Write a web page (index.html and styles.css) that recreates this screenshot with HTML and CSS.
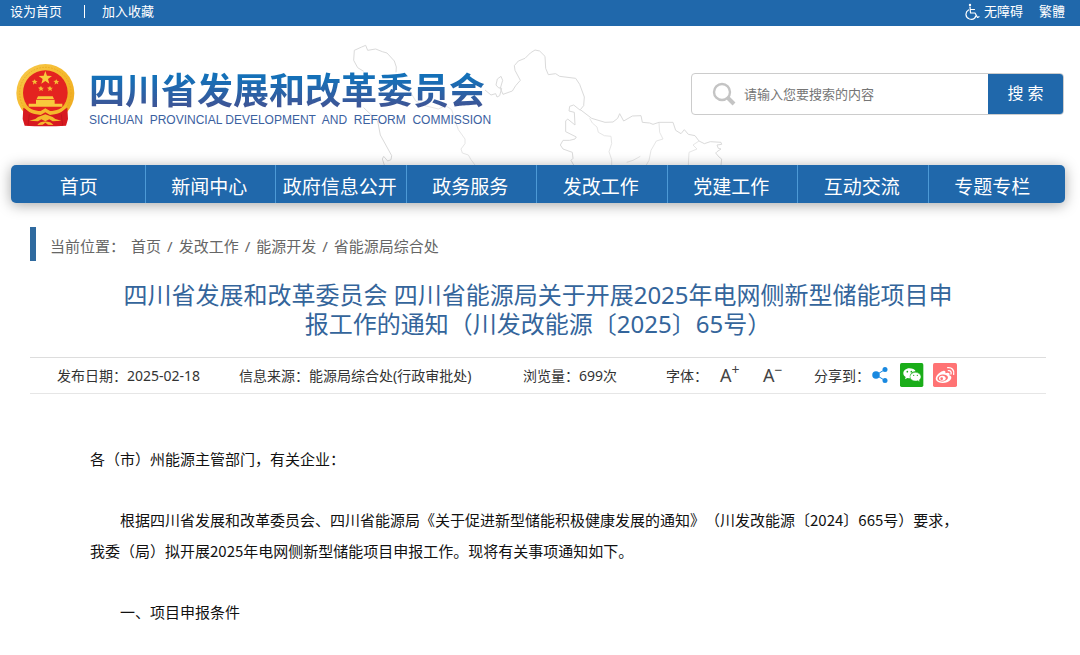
FILE: index.html
```html
<!DOCTYPE html>
<html lang="zh-CN">
<head>
<meta charset="utf-8">
<meta name="viewport" content="width=device-width, initial-scale=1">
<title>四川省发展和改革委员会</title>
<link rel="stylesheet" href="styles.css">
</head>
<body>
<div class="topbar">
  <div class="topbar-links"><a href="#">设为首页</a><span class="topbar-sep"></span><a href="#">加入收藏</a></div>
  <div class="topbar-tools">
    <a class="access" href="#"><svg width="15" height="17" viewBox="0 0 30 34" fill="none" stroke="currentColor" stroke-width="2.4" stroke-linecap="round" stroke-linejoin="round"><circle cx="10" cy="4" r="2.4" fill="currentColor" stroke="none"/><path d="M10 8l1 12h9l5 9 3-1.500M11 13h8M7 14c-7 4-7 15 2 18 6 1.500 11-1 12.500-6"/></svg>无障碍</a>
    <a href="#">繁體</a>
  </div>
</div>
<header class="header">
  <svg class="map" width="385" height="130" viewBox="0 0 1155 390" fill="none" stroke="#dadada" stroke-width="3" stroke-linejoin="round">
    <path d="M56 109L38 98 26 76 28 46 50 36 62 31 68 46 92 42 112 50 126 54 148 78 154 96 153 112M420 165L438 180 452 176 456 186 464 182 470 160 460 158 453 150 457 132 468 124 473 136 466 160 474 178 502 168 512 152 526 136 510 106 508 92 520 78 540 70 556 54 570 45 584 48 600 64 602 100 610 119 632 116 644 124 692 130 704 148 718 186 716 212 706 224 740 250 780 262 804 261 818 250 824 236 836 258 862 243 888 242 892 262 914 264 924 268 942 262 984 262 992 286 1008 296 1018 284 1030 298 1050 302 1062 318 1078 326 1096 320 1128 322 1130 328 1116 330 1120 340 1128 342 1116 350 1112 354 1122 366 1130 372 1128 390"/>
    <path d="M56 218L98 258 106 300 140 362 138 374 128 378 116 364 112 372 118 390"/>
    <path stroke="#e6e6e6" d="M187 155L212 198 240 212 280 222 302 212 320 224 335 270 340 284 360 312 360 326 348 342 352 354 370 360 378 374 390 390"/>
    <path d="M706 226L686 210 674 214 672 228 688 232 690 270 668 252 662 258 662 290 694 306 690 312 674 316 654 316 646 330 654 342 682 352 684 370 678 376 686 390"/>
    <path stroke="#e6e6e6" d="M734 250L742 264 756 276 760 292 778 302 798 304 800 326 792 350 800 374 800 390M942 264L944 292 954 312 934 318 918 346 912 376 904 390M845 382L864 376 886 364M1062 318L1044 330 1056 342 1032 352 1030 390"/>
  </svg>
  <a class="brand" href="#">
    <svg class="emblem" width="60" height="64" viewBox="0 0 180 192" aria-label="国徽">
      <defs><linearGradient id="gold" x1="0" y1="0" x2="1" y2="1"><stop offset="0" stop-color="#f7cb4e"/><stop offset=".5" stop-color="#f5b92c"/><stop offset="1" stop-color="#eda71d"/></linearGradient></defs>
      <circle cx="88" cy="90" r="87" fill="url(#gold)"/>
      <circle cx="88" cy="90" r="77" fill="none" stroke="#e5a11a" stroke-width="2" stroke-dasharray="5 4"/>
      <circle cx="88" cy="89" r="67" fill="#e42320"/>
      <path fill="#f8ca3c" d="M88 24l5 14 15 1-12 9 4 14-12-8-12 8 4-14-12-9 15-1z"/>
      <path fill="#f5bd36" d="M56 49l3 5 6 0-5 4 2 6-6-3-5 4 1-7-5-4 6-1zM121 49l3 5 6 0-5 4 2 6-6-3-5 4 1-7-5-4 6-1zM75 69l3 5 6 0-5 4 2 6-6-3-5 4 1-7-5-4 6-1zM102 69l3 5 6 0-5 4 2 6-6-3-5 4 1-7-5-4 6-1z"/>
      <path fill="#f8ca3c" d="M66 100h44l4 8H62zM60 110h56v12H60zM38 122h101v9H38z"/>
      <path fill="#d71920" d="M22 134c20 10 36 16 66 18 30-2 46-8 66-18l2 34-6 20-30 2H56l-30-2-6-20z"/>
      <path fill="#f5b92c" d="M22 122c16 14 34 22 52 22l14-8 14 8c18 0 36-8 52-22-4 18-18 28-38 32l-14 2-14-8-14 8-14-2c-20-4-34-14-38-32z"/>
      <path fill="#f5b92c" d="M66 162l22-8 22 8 8 6 18 5-26 2-10-6-12 6-12-6-10 6-26-2 18-5zM64 186c8-14 40-14 48 0l-16-1-8-6-8 6z"/>
      <path fill="none" stroke="#b5121b" stroke-width="2" d="M40 154l-4 34M136 154l4 34"/>
    </svg>
    <span class="brand-text"><span class="brand-cn">四川省发展和改革委员会</span><span class="brand-en">SICHUAN  PROVINCIAL DEVELOPMENT  AND  REFORM  COMMISSION</span></span>
  </a>
  <form class="search">
    <label class="search-label" for="q" aria-label="搜索"><svg width="24" height="24" viewBox="0 0 24 24" fill="none" stroke="#c4c4c4"><circle cx="10" cy="10" r="8" stroke-width="2.400"/><path d="M16 16l6 6" stroke-width="4"/></svg></label>
    <input id="q" class="search-input" type="text" placeholder="请输入您要搜索的内容">
    <button class="search-btn" type="button">搜 索</button>
  </form>
</header>
<nav class="nav">
  <a href="#">首页</a><a href="#">新闻中心</a><a href="#">政府信息公开</a><a href="#">政务服务</a><a href="#">发改工作</a><a href="#">党建工作</a><a href="#">互动交流</a><a href="#">专题专栏</a>
</nav>
<main class="main">
  <div class="crumbs"><span class="crumbs-label">当前位置：</span><a href="#">首页</a><span>/</span><a href="#">发改工作</a><span>/</span><a href="#">能源开发</a><span>/</span><a href="#">省能源局综合处</a></div>
  <h1 class="title">四川省发展和改革委员会 四川省能源局关于开展2025年电网侧新型储能项目申报工作的通知（川发改能源〔2025〕65号）</h1>
  <div class="meta">
    <span>发布日期：2025-02-18</span>
    <span>信息来源：能源局综合处(行政审批处)</span>
    <span>浏览量：699次</span>
    <div class="meta-group font-size"><span>字体：</span><button type="button">A<sup>+</sup></button><button type="button">A<sup>−</sup></button></div>
    <div class="meta-group share"><span>分享到：</span>
      <a href="#" aria-label="分享"><svg width="16" height="16" viewBox="0 0 32 32" fill="#1989e0"><path d="M8 16L26 5M8 16l18 11" stroke="#1989e0" stroke-width="2"/><circle cx="8" cy="16" r="7.500"/><circle cx="26" cy="5" r="5"/><circle cx="26" cy="27" r="5"/></svg></a>
      <a href="#" aria-label="微信"><svg width="24" height="24" viewBox="0 0 72 72"><rect width="70" height="72" rx="5" fill="#1aad19"/><path fill="#fff" d="M28 16c-10 0-18 7-18 15 0 5 3 9 7 11l-2 7 7-4c3 1 6 1 9 1-4-12 6-22 16-21-2-5-10-9-19-9z"/><path fill="#fff" stroke="#1aad19" stroke-width="1.500" d="M46 28c-9 0-16 6-16 13s7 13 16 13c2 0 5 0 7-1l6 3-1-5c3-3 5-6 5-10 0-7-8-13-17-13z"/><g fill="#1aad19"><circle cx="22" cy="26" r="2.500"/><circle cx="34" cy="26" r="2.500"/><circle cx="41" cy="37" r="2"/><circle cx="52" cy="37" r="2"/></g></svg></a>
      <a href="#" aria-label="微博"><svg width="24" height="24" viewBox="0 0 72 72"><rect width="72" height="72" rx="5" fill="#ff7374"/><path fill="#fff" d="M30 24c5-2 9 0 7 7 8-3 15-2 12 6 7 2 8 8 3 14-9 12-37 12-43 0-4-9 9-24 21-27z"/><ellipse cx="29" cy="45" rx="16" ry="10.500" fill="#ff7374" transform="rotate(-10 29 45)"/><ellipse cx="28" cy="46" rx="10" ry="7.500" fill="#fff"/><circle cx="26" cy="47" r="4" fill="#ff7374"/><path d="M46 23c6-1 10 4 8 10M44 14c12-2 21 8 18 20" fill="none" stroke="#fff" stroke-width="4" stroke-linecap="round"/></svg></a>
    </div>
  </div>
  <article class="article">
    <p class="flush">各（市）州能源主管部门，有关企业：</p>
    <p>根据四川省发展和改革委员会、四川省能源局《关于促进新型储能积极健康发展的通知》（川发改能源〔2024〕665号）要求，我委（局）拟开展2025年电网侧新型储能项目申报工作。现将有关事项通知如下。</p>
    <p>一、项目申报条件</p>
  </article>
</main>
</body>
</html>
```
FILE: styles.css
```css
* { box-sizing: border-box; }
body {
  margin: 0;
  background: #fff;
  color: #333;
  font-family: "Noto Sans", "Noto Sans CJK SC", sans-serif;
  font-size: 14px;
  text-spacing-trim: space-all;
}
a { color: inherit; text-decoration: none; }
button { font-family: inherit; border: 0; cursor: pointer; }
svg { display: block; flex: none; }

.topbar {
  display: flex;
  justify-content: space-between;
  height: 26px;
  padding: 0 15px 3px 10px;
  background: #2068ab;
  color: #fff;
  font-size: 13px;
  line-height: 23px;
}
.topbar-links, .topbar-tools, .access { display: flex; align-items: center; }
.topbar-sep { width: 1px; height: 13px; margin: 0 17px 0 22px; background: #fff; }
.topbar-tools { gap: 16px; }
.access { gap: 4px; }

.header {
  position: relative;
  display: flex;
  justify-content: space-between;
  align-items: flex-start;
  padding: 37px 16px 38px;
}
.map { position: absolute; left: 345px; top: 9px; z-index: -1; }
.brand { display: flex; gap: 13px; }
.brand-text { display: flex; flex-direction: column; padding-top: 6px; }
.brand-cn {
  font-size: 36px;
  font-weight: 700;
  line-height: 44px;
  background: linear-gradient(#1470b8 20%, #3e5596 85%);
  background-clip: text;
  color: transparent;
}
.brand-en {
  font-family: "Liberation Sans", Arial, sans-serif;
  font-size: 12px;
  line-height: 14px;
  color: #3b619f;
  white-space: pre;
}
.search {
  display: flex;
  width: 373px;
  height: 42px;
  margin-top: 10px;
  border: 1px solid #ccc;
  border-radius: 4px;
  background: #fff;
  overflow: hidden;
}
.search-label { display: flex; align-items: center; padding: 0 8px 0 20px; }
.search-input {
  flex: 1;
  min-width: 0;
  padding: 0;
  border: 0;
  outline: 0;
  background: none;
  font-family: inherit;
  font-size: 13px;
}
.search-input::placeholder { color: #757575; }
.search-btn {
  width: 75px;
  padding: 0 0 5px;
  background: #2068ab;
  color: #fff;
  font-size: 16px;
}

.nav {
  display: flex;
  margin: 0 15px 0 11px;
  padding: 0 7px 0 4px;
  border-radius: 5px;
  background: #2068ab;
  box-shadow: 0 2px 14px rgba(0, 0, 0, .35);
}
.nav a {
  flex: 1 0 0;
  padding: 6px 2px 0 0;
  border-left: 1px solid #4d9ad6;
  color: #fff;
  font-size: 19px;
  line-height: 32px;
  text-align: center;
  white-space: nowrap;
}
.nav a:first-child { border-left: 0; }

.main { padding: 24px 34px 0 30px; }
.crumbs {
  display: flex;
  gap: 6px;
  padding: 5px 0 0 14px;
  border-left: 6px solid #2f6a9f;
  color: #666;
  font-size: 15px;
  line-height: 29px;
}
.title {
  margin: 19px 0;
  padding: 0 88px;
  color: #34659b;
  font-size: 24px;
  font-weight: 400;
  line-height: 29px;
  text-align: center;
}
.meta {
  display: grid;
  grid-template-columns: 182fr 284fr 143fr 148fr 232fr;
  align-items: center;
  height: 37px;
  padding: 0 0 1px 27px;
  border-top: 1px solid #ddd;
  border-bottom: 1px solid #e6e6e6;
  white-space: nowrap;
}
.meta-group { display: flex; align-items: center; }
.font-size button {
  width: 31px;
  margin-left: 12px;
  padding: 0;
  background: none;
  color: #444;
  font-size: 18px;
  line-height: 24px;
  text-align: left;
}
.font-size sup { font-size: 14px; line-height: 0; }
.share a { margin-left: 9px; }
.share span + a { margin: 0 3px 0 2px; }

.article {
  display: flex;
  flex-direction: column;
  gap: 30px;
  padding: 49px 68px 28px 60px;
  color: #111;
  font-family: "Noto Sans CJK SC", sans-serif;
  font-size: 15px;
  line-height: 31px;
}
.article p { margin: 0; padding-right: 10px; text-indent: 2em; }
.article .flush { text-indent: 0; }
```
